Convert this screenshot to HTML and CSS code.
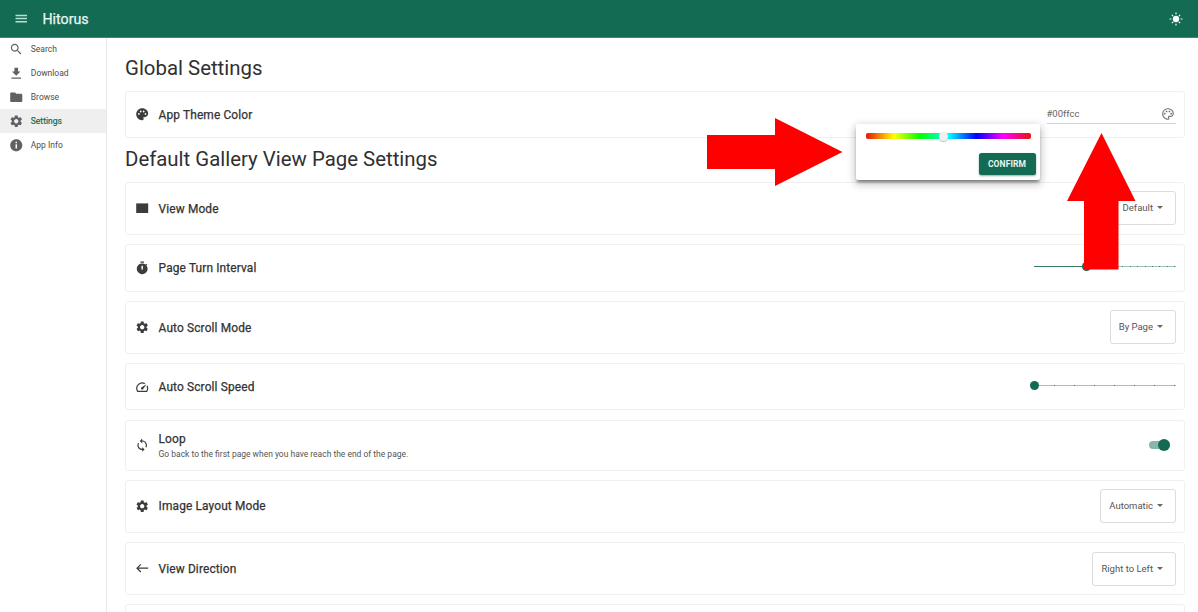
FILE: index.html
```html
<!DOCTYPE html>
<html lang="en">
<head>
<meta charset="utf-8">
<title>Hitorus</title>
<link rel="stylesheet" href="styles.css">
</head>
<body>
<svg class="defs" aria-hidden="true">
  <symbol id="gear" viewBox="0 0 24 24"><path d="M19.14 12.94c.04-.3.06-.61.06-.94 0-.32-.02-.64-.07-.94l2.03-1.58c.18-.14.23-.41.12-.61l-1.92-3.32c-.12-.22-.37-.29-.59-.22l-2.39.96c-.5-.38-1.03-.7-1.62-.94l-.36-2.54c-.04-.24-.24-.41-.48-.41h-3.84c-.24 0-.43.17-.47.41l-.36 2.54c-.59.24-1.13.57-1.62.94l-2.39-.96c-.22-.08-.47 0-.59.22L2.74 8.87c-.12.21-.08.47.12.61l2.03 1.58c-.05.3-.09.63-.09.94s.02.64.07.94l-2.03 1.58c-.18.14-.23.41-.12.61l1.92 3.32c.12.22.37.29.59.22l2.39-.96c.5.38 1.03.7 1.62.94l.36 2.54c.05.24.24.41.48.41h3.84c.24 0 .44-.17.47-.41l.36-2.54c.59-.24 1.13-.56 1.62-.94l2.39.96c.22.08.47 0 .59-.22l1.92-3.32c.12-.22.07-.47-.12-.61l-2.01-1.58zM12 15.6c-1.98 0-3.6-1.62-3.6-3.6s1.62-3.6 3.6-3.6 3.6 1.62 3.6 3.6-1.62 3.6-3.6 3.6z"/></symbol>
</svg>
<header class="appbar">
  <svg class="menu" viewBox="0 0 24 24"><path d="M2.500 19h19v-2.500h-19zM2.500 13.700h19v-2.500h-19zM2.500 6v2.500h19V6z"/></svg>
  <span class="brand">Hitorus</span>
  <svg class="sun" viewBox="0 0 24 24"><circle cx="12" cy="12" r="5.500"/><path d="M11 1h2v3h-2zM11 20h2v3h-2zM1 11h3v2H1zM20 11h3v2h-3zM4.2 5.6l1.4-1.4 2.1 2.1-1.4 1.4zM16.3 17.7l1.4-1.4 2.1 2.1-1.4 1.4zM18.4 4.2l1.4 1.4-2.1 2.1-1.4-1.4zM6.3 16.3l1.4 1.4-2.1 2.1-1.4-1.4z"/></svg>
</header>
<div class="shell">
  <nav class="drawer">
    <a class="nav-item"><svg viewBox="0 0 24 24"><path d="M15.5 14h-.79l-.28-.27C15.41 12.59 16 11.11 16 9.5 16 5.91 13.09 3 9.5 3S3 5.91 3 9.5 5.91 16 9.5 16c1.61 0 3.09-.59 4.23-1.57l.27.28v.79l5 4.99L20.49 19l-4.99-5zm-6 0C7.01 14 5 11.99 5 9.5S7.01 5 9.5 5 14 7.01 14 9.5 11.99 14 9.5 14z"/></svg>Search</a>
    <a class="nav-item"><svg viewBox="0 0 24 24"><path d="M19 9h-4V3H9v6H5l7 7 7-7zM4 19v2h16v-2z"/></svg>Download</a>
    <a class="nav-item"><svg viewBox="0 0 24 24"><path d="M10 4H4c-1.1 0-2 .9-2 2v12c0 1.1.9 2 2 2h16c1.1 0 2-.9 2-2V8c0-1.1-.9-2-2-2h-8l-2-2z"/></svg>Browse</a>
    <a class="nav-item active"><svg><use href="#gear"/></svg>Settings</a>
    <a class="nav-item"><svg viewBox="0 0 24 24"><path d="M12 2C6.48 2 2 6.48 2 12s4.48 10 10 10 10-4.48 10-10S17.52 2 12 2zm1.2 15.5h-2.4v-7h2.4v7zm0-8.8h-2.4V6.300h2.400v2.400z"/></svg>App Info</a>
  </nav>
  <main class="content">
    <h1 class="heading">Global Settings</h1>
    <section class="card theme">
      <svg class="icon" viewBox="0 0 24 24"><path d="M12 2C6.490 2 2 6.490 2 12s4.490 10 10 10c1.380 0 2.500-1.120 2.500-2.500 0-.61-.23-1.200-.64-1.670-.08-.1-.13-.21-.13-.33 0-.28.22-.5.5-.5H16c3.310 0 6-2.690 6-6 0-4.960-4.490-9-10-9zm5.500 11c-.83 0-1.500-.67-1.500-1.500s.67-1.500 1.500-1.500 1.500.67 1.500 1.500-.67 1.500-1.500 1.500zm-3-4c-.83 0-1.500-.67-1.500-1.500S13.670 6 14.500 6s1.500.67 1.500 1.500S15.330 9 14.500 9zM5 11.500C5 10.670 5.670 10 6.500 10s1.500.67 1.500 1.500S7.330 13 6.500 13 5 12.330 5 11.500zm6-4C11 8.330 10.330 9 9.500 9S8 8.330 8 7.500 8.670 6 9.500 6s1.500.67 1.500 1.500z"/></svg>
      <span class="label">App Theme Color</span>
      <div class="field"><span>#00ffcc</span>
        <svg viewBox="0 0 24 24"><path d="M12 22C6.490 22 2 17.510 2 12S6.490 2 12 2s10 4.040 10 9c0 3.310-2.690 6-6 6h-1.770c-.28 0-.5.22-.5.5 0 .12.05.23.13.33.41.47.64 1.060.64 1.670 0 1.380-1.120 2.500-2.500 2.500zm0-18c-4.410 0-8 3.590-8 8s3.590 8 8 8c.28 0 .5-.22.5-.5 0-.16-.08-.28-.14-.35-.41-.46-.63-1.050-.63-1.650 0-1.380 1.120-2.500 2.500-2.500H16c2.210 0 4-1.790 4-4 0-3.860-3.590-7-8-7z"/><circle cx="6.500" cy="11.500" r="1.500"/><circle cx="9.500" cy="7.500" r="1.500"/><circle cx="14.500" cy="7.500" r="1.500"/><circle cx="17.500" cy="11.500" r="1.500"/></svg>
      </div>
    </section>
    <h2 class="heading second">Default Gallery View Page Settings</h2>
    <div class="list">
      <section class="card tall">
        <svg class="icon" viewBox="0 0 24 24"><path d="M2 4h20v16H2z"/></svg>
        <span class="label">View Mode</span>
        <div class="select">Default<i></i></div>
      </section>
      <section class="card">
        <svg class="icon" viewBox="0 0 24 24"><path d="M9 1h6v2H9zM19.030 7.390l1.420-1.420c-.43-.51-.9-.99-1.410-1.410l-1.420 1.420A9 9 0 1 0 19.030 7.390zM13.200 14h-2.400V8h2.400z"/></svg>
        <span class="label">Page Turn Interval</span>
        <div class="slider interval"><div class="fill"></div><div class="ticks"><b></b><b></b><b></b><b></b><b></b><b></b><b></b><b></b><b></b><b></b><b></b><b></b><b></b><b></b><b></b><b></b><b></b><b></b><b></b><b></b></div><div class="thumb"></div></div>
      </section>
      <section class="card tall">
        <svg class="icon"><use href="#gear"/></svg>
        <span class="label">Auto Scroll Mode</span>
        <div class="select">By Page<i></i></div>
      </section>
      <section class="card">
        <svg class="icon" viewBox="0 0 24 24"><path d="M20.380 8.570l-1.230 1.850a8 8 0 0 1-.22 7.580H5.070A8 8 0 0 1 15.580 6.850l1.850-1.230A10 10 0 0 0 3.350 19a2 2 0 0 0 1.720 1h13.850a2 2 0 0 0 1.740-1 10 10 0 0 0-.27-10.440zM10.590 15.410a2 2 0 0 0 2.830 0l5.660-8.490-8.490 5.660a2 2 0 0 0 0 2.830z"/></svg>
        <span class="label">Auto Scroll Speed</span>
        <div class="slider speed"><div class="ticks"><b></b><b></b><b></b><b></b><b></b><b></b><b></b></div><div class="thumb"></div></div>
      </section>
      <section class="card loop">
        <svg class="icon" viewBox="0 0 24 24"><path d="M12 4V1L8 5l4 4V6c3.310 0 6 2.690 6 6 0 1.010-.25 1.970-.7 2.800l1.460 1.460C19.540 15.030 20 13.570 20 12c0-4.420-3.580-8-8-8zm0 14c-3.310 0-6-2.690-6-6 0-1.010.25-1.970.7-2.800L5.240 7.740C4.460 8.970 4 10.430 4 12c0 4.420 3.580 8 8 8v3l4-4-4-4v3z"/></svg>
        <div class="text"><span class="label">Loop</span><span class="hint">Go back to the first page when you have reach the end of the page.</span></div>
        <div class="switch"></div>
      </section>
      <section class="card tall">
        <svg class="icon"><use href="#gear"/></svg>
        <span class="label">Image Layout Mode</span>
        <div class="select">Automatic<i></i></div>
      </section>
      <section class="card tall">
        <svg class="icon" viewBox="0 0 24 24"><path d="M22 11H5.830l4.580-4.590L9 5l-7 7 7 7 1.410-1.410L5.830 13H22z"/></svg>
        <span class="label">View Direction</span>
        <div class="select">Right to Left<i></i></div>
      </section>
      <section class="card tall"></section>
    </div>
  </main>
</div>
<div class="popover"><div class="hue"><div class="knob"></div></div><button class="confirm">CONFIRM</button></div>
<svg class="arrows" viewBox="0 0 1198 612"><path d="M707 135h68v-17l67.500 34-67.500 34v-17h-68zM1101.500 133l34 68H1118.500v68.500H1084v-68.500h-17z"/></svg>
</body>
</html>
```
FILE: styles.css
```css
* { box-sizing: border-box; }
body { margin: 0; height: 612px; overflow: hidden; position: relative; background: #fff; color: #424242; font-family: Roboto, sans-serif; }
.defs { position: absolute; width: 0; height: 0; }
svg { fill: currentColor; flex: none; }
.appbar { height: 38px; display: flex; align-items: center; padding: 0 15px 0 14px; background: #146b54; border-bottom: 1px solid #3f8571; color: #fff; position: relative; }
.menu { width: 14.500px; height: 14.500px; color: #b9e0d4; }
.brand { margin: 0 0 0 14px; font-size: 14.200px; font-weight: 400; letter-spacing: 0; color: #e9f7f2; -webkit-text-stroke: .25px; }
.sun { width: 14px; height: 14px; margin-left: auto; }
.shell { display: flex; height: 574px; overflow: hidden; }
.drawer { width: 107px; border-right: 1px solid #e8e8e8; flex: none; margin-top: -.7px; }
.nav-item { height: 24px; display: flex; align-items: center; gap: 7px; padding-left: 9.300px; font-size: 8.500px; color: #4d4d4d; }
.nav-item svg { width: 14.500px; height: 14.500px; color: #616161; }
.active { background: #efefef; color: #146b54; -webkit-text-stroke: .2px; }
.active svg { -webkit-text-stroke: 0; }
.content { flex: 1; padding: 17px 13px 0 18px; }
.heading { margin: 0; height: 26px; line-height: 26px; font-size: 20.400px; font-weight: 400; letter-spacing: 0; color: #303030; }
.theme { margin-top: 9.500px; }
.second { margin-top: 7.500px; }
.list { margin-top: 10.300px; display: flex; flex-direction: column; gap: 9.100px; }
.card { height: 47.500px; flex: none; border: 1px solid #f0f0f0; border-radius: 3px; display: flex; align-items: center; padding: 0 8.500px 0 9px; }
.tall { height: 53.200px; }
.loop { height: 51px; }
.icon { width: 14.400px; height: 14.400px; margin-right: 9.200px; color: #3c3c3c; }
.label { font-size: 11.900px; line-height: 15px; font-weight: 400; letter-spacing: .14px; color: #333; -webkit-text-stroke: .25px; padding-top: 1.500px; }
.select { margin-left: auto; height: 34px; border: 1px solid #dcdcdc; border-radius: 3px; display: flex; align-items: center; padding: 0 11.500px 1px 8px; font-size: 9.500px; color: #555; }
.select i { margin-left: 4px; border: 3.200px solid transparent; border-top-color: #666; border-bottom: 0; }
.field { width: 129px; height: 20px; margin-left: auto; margin-right: 0; display: flex; align-items: center; justify-content: space-between; border-bottom: 1px solid #d2d2d2; font-size: 9.500px; color: #666; }
.field svg { width: 14px; height: 14px; margin-right: .5px; color: #777; }
.text { display: flex; flex-direction: column; padding-top: 2px; }
.hint { font-size: 8.480px; line-height: 15px; color: #555; }
.slider { width: 142px; height: 1px; margin-left: auto; background: #a1c4ba; position: relative; }
.fill { width: 53px; height: 1px; background: #32795f; }
.thumb { position: absolute; top: -3.500px; left: -3.500px; width: 9px; height: 9px; border-radius: 50%; background: #146b54; }
.interval .thumb { left: 48.500px; }
.ticks { position: absolute; inset: 0; display: flex; justify-content: space-between; }
.speed .ticks { left: 20px; }
.ticks b { width: 1px; height: 1px; background: #4d7569; }
.slider { top: -1.500px; }
.switch { width: 21px; height: 8px; border-radius: 4px; background: #8ab5aa; margin: 0 6px 0 auto; position: relative; }
.switch::after { content: ""; position: absolute; top: -2px; right: 0; width: 12px; height: 12px; border-radius: 50%; background: #146b54; }
.popover { position: absolute; left: 856px; top: 124px; width: 184px; height: 56px; padding: 9px 4.500px 0 10px; background: #fff; border-radius: 2px; box-shadow: 0 3px 3px -1px rgba(0,0,0,.4), 0 3px 8px 1px rgba(0,0,0,.25); }
.hue { width: 165px; height: 6px; border-radius: 2px; background: linear-gradient(to right, #e8130c 0%, #ff0 17%, #0f0 33%, #0ff 50%, #00f 67%, #f0f 83%, #e8130c 100%); position: relative; }
.knob { position: absolute; left: 73px; top: -1px; width: 8.500px; height: 8.500px; border-radius: 50%; background: #f0f0f0; box-shadow: 0 1px 1px rgba(0,0,0,.25); }
.confirm { display: block; margin: 14px 0 0 auto; width: 57px; height: 22px; padding: 0; border: 0; border-radius: 2.500px; background: #146b54; color: #e9f5f1; font: 700 8.500px Roboto, sans-serif; letter-spacing: .1px; box-shadow: 0 1px 2px rgba(20,107,84,.5); }
.arrows { position: absolute; left: 0; top: 0; width: 1198px; height: 612px; fill: #f00; pointer-events: none; }
```
